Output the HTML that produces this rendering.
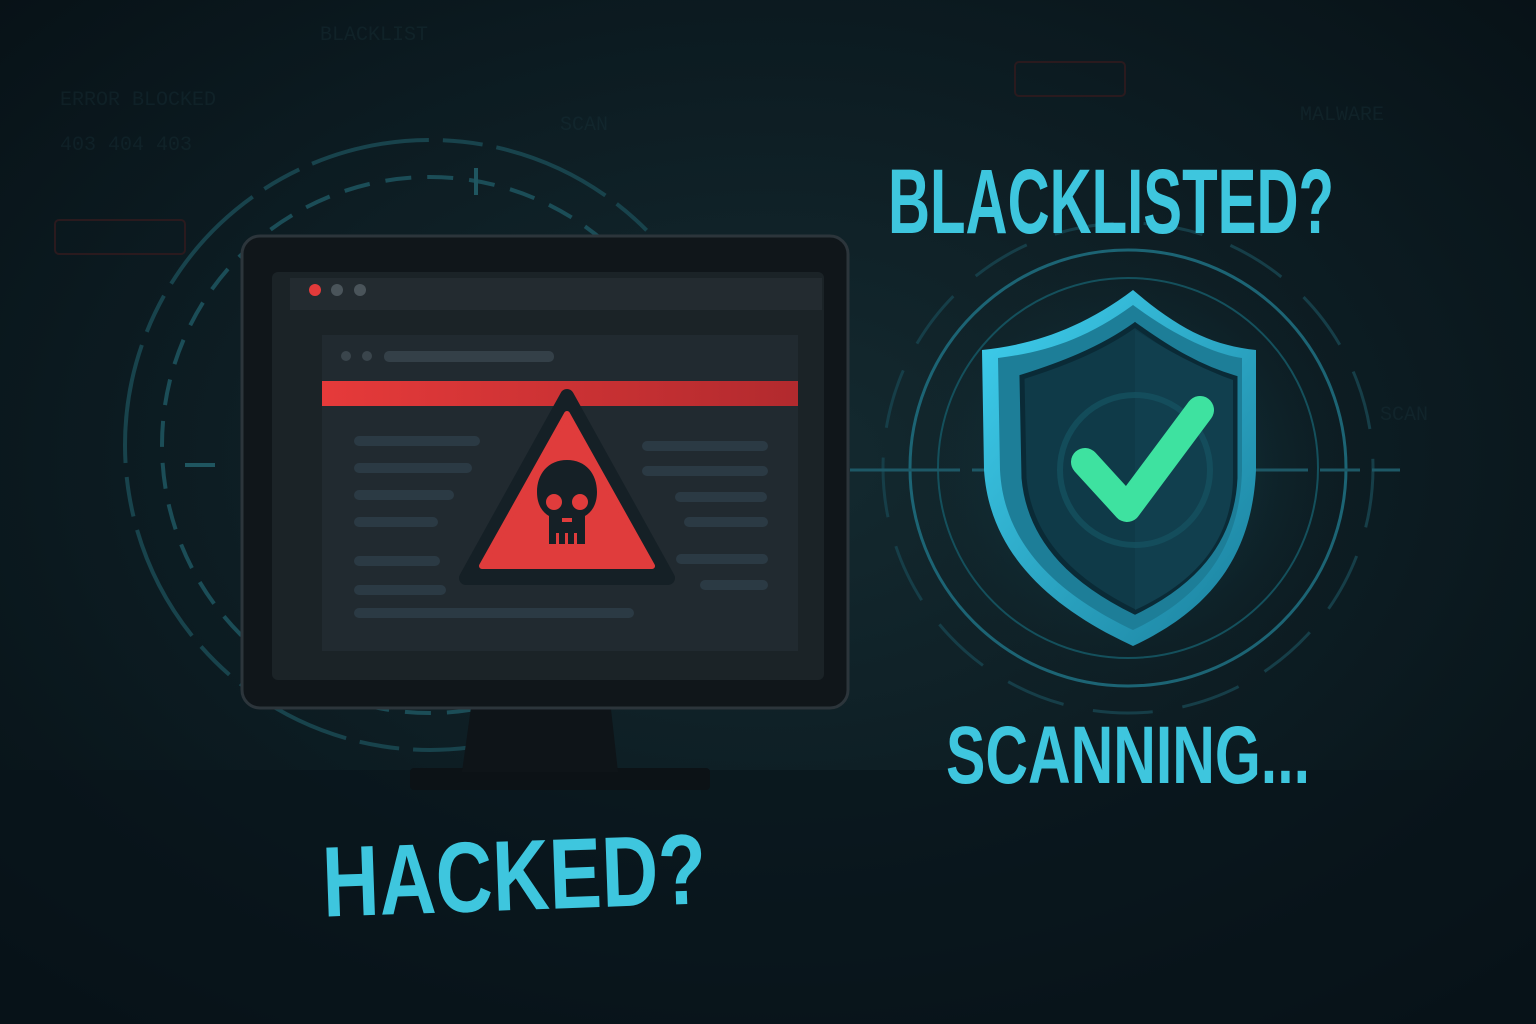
<!DOCTYPE html>
<html><head><meta charset="utf-8"><style>
html,body{margin:0;padding:0;background:#0a171c;}
svg{display:block}
</style></head><body>
<svg width="1536" height="1024" viewBox="0 0 1536 1024" xmlns="http://www.w3.org/2000/svg">
<defs>
<radialGradient id="bg" cx="0.5" cy="0.45" r="0.7">
<stop offset="0" stop-color="#142a30"/><stop offset="0.6" stop-color="#0c1b21"/><stop offset="1" stop-color="#071116"/>
</radialGradient>
<radialGradient id="glow" cx="0.5" cy="0.5" r="0.5">
<stop offset="0" stop-color="#1a6a7a" stop-opacity="0.55"/><stop offset="1" stop-color="#0c1b21" stop-opacity="0"/>
</radialGradient>
<linearGradient id="sh" x1="0" y1="0" x2="1" y2="1">
<stop offset="0" stop-color="#3fd0ef"/><stop offset="1" stop-color="#1a7f9c"/>
</linearGradient>
<linearGradient id="redbar" x1="0" x2="1">
<stop offset="0" stop-color="#e63a3a"/><stop offset="1" stop-color="#b22a2e"/>
</linearGradient>
</defs>
<rect width="1536" height="1024" fill="url(#bg)"/>
<rect x="0" y="770" width="1536" height="254" fill="#08141a" opacity="0.6"/>
<g font-family="Liberation Mono, monospace" fill="#1d3a42" font-size="20" opacity="0.3">
<text x="60" y="105">ERROR  BLOCKED</text><text x="320" y="40">BLACKLIST</text>
<text x="60" y="150">403 404  403</text><text x="560" y="130">SCAN</text>
<text x="1300" y="120">MALWARE</text><text x="1380" y="420">SCAN</text>
</g>
<rect x="55" y="220" width="130" height="34" rx="4" fill="none" stroke="#2a1a1e" stroke-width="2"/>
<rect x="1015" y="62" width="110" height="34" rx="4" fill="none" stroke="#2a1a1e" stroke-width="2"/>
<g fill="none" stroke="#18434c" stroke-width="4">
<circle cx="430" cy="445" r="305" stroke-dasharray="120 14 40 14"/>
<circle cx="430" cy="445" r="268" stroke-dasharray="26 16" stroke="#1b4d57"/>
</g>
<line x1="476" y1="168" x2="476" y2="195" stroke="#1f5660" stroke-width="4"/>
<line x1="185" y1="465" x2="215" y2="465" stroke="#1f5660" stroke-width="4"/>
<circle cx="1128" cy="468" r="230" fill="url(#glow)"/>
<g fill="none" stroke="#1c6474" stroke-width="3">
<circle cx="1128" cy="468" r="218"/>
<circle cx="1128" cy="468" r="245" stroke="#163e48" stroke-dasharray="60 30"/>
<circle cx="1128" cy="468" r="190" stroke="#14505c" stroke-width="2"/>
</g>
<line x1="850" y1="470" x2="1400" y2="470" stroke="#1d5866" stroke-width="3" stroke-dasharray="110 12 40 12"/>
<rect x="410" y="768" width="300" height="22" rx="4" fill="#0c1216"/>
<path d="M472,700 L610,700 L618,772 L462,772 Z" fill="#0e1418"/>
<rect x="242" y="236" width="606" height="472" rx="18" fill="#10161a" stroke="#2c353b" stroke-width="3"/>
<rect x="272" y="272" width="552" height="408" rx="6" fill="#1b2327"/>
<rect x="290" y="278" width="532" height="32" fill="#232b30"/>
<circle cx="315" cy="290" r="6" fill="#e23a3a"/><circle cx="337" cy="290" r="6" fill="#4a545a"/><circle cx="360" cy="290" r="6" fill="#4a545a"/>
<rect x="322" y="335" width="476" height="316" fill="#212a30"/>
<circle cx="346" cy="356" r="5" fill="#3a454c"/><circle cx="367" cy="356" r="5" fill="#3a454c"/>
<rect x="384" y="351" width="170" height="11" rx="5" fill="#344048"/>
<rect x="322" y="381" width="476" height="25" fill="url(#redbar)"/>
<g fill="#2b3a44">
<rect x="354" y="436" width="126" height="10" rx="5"/><rect x="354" y="463" width="118" height="10" rx="5"/>
<rect x="354" y="490" width="100" height="10" rx="5"/><rect x="354" y="517" width="84" height="10" rx="5"/>
<rect x="354" y="556" width="86" height="10" rx="5"/><rect x="354" y="585" width="92" height="10" rx="5"/>
<rect x="354" y="608" width="280" height="10" rx="5"/>
<rect x="642" y="441" width="126" height="10" rx="5"/><rect x="642" y="466" width="126" height="10" rx="5"/>
<rect x="675" y="492" width="92" height="10" rx="5"/><rect x="684" y="517" width="84" height="10" rx="5"/>
<rect x="676" y="554" width="92" height="10" rx="5"/><rect x="700" y="580" width="68" height="10" rx="5"/>
</g>
<path d="M567,396 L668,578 L466,578 Z" fill="#152026" stroke="#152026" stroke-width="14" stroke-linejoin="round"/>
<path d="M567,414 L652,566 L482,566 Z" fill="#e03c3c" stroke="#e03c3c" stroke-width="6" stroke-linejoin="round"/>
<path d="M567,460 C548,460 537,474 537,492 C537,504 542,512 549,516 L549,544 L585,544 L585,516 C592,512 597,504 597,492 C597,474 586,460 567,460 Z" fill="#152026"/>
<circle cx="554" cy="502" r="8" fill="#e03c3c"/><circle cx="580" cy="502" r="8" fill="#e03c3c"/>
<rect x="562" y="518" width="10" height="4" fill="#e03c3c"/>
<g fill="#e03c3c"><rect x="556" y="533" width="3" height="11"/><rect x="565" y="533" width="3" height="11"/><rect x="574" y="533" width="3" height="11"/></g>
<path d="M1133,290 C1080,330 1030,345 982,350 L984,470 C990,560 1060,612 1133,646 C1206,612 1252,560 1256,470 L1256,350 C1212,345 1180,330 1133,290 Z" fill="url(#sh)"/>
<path d="M1133,305 C1085,340 1045,352 998,358 L1000,470 C1004,550 1066,598 1133,630 C1200,598 1240,550 1242,470 L1242,358 C1220,355 1180,340 1133,305 Z" fill="#1d7e98"/>
<path d="M1135,325 C1100,350 1060,365 1022,377 L1024,478 C1030,545 1080,585 1135,612 C1190,585 1232,545 1235,478 L1235,378 C1200,368 1170,350 1135,325 Z" fill="#0f3a48" stroke="#0a2a36" stroke-width="5"/>
<path d="M1135,330 L1135,610 C1190,585 1232,545 1233,478 L1233,380 C1200,368 1170,352 1135,330 Z" fill="#113f4e"/>
<circle cx="1135" cy="470" r="75" fill="none" stroke="#165462" stroke-width="6" opacity="0.7"/>
<path d="M1085,462 L1127,508 L1200,410" fill="none" stroke="#3ee2a0" stroke-width="28" stroke-linecap="round" stroke-linejoin="round"/>
<g font-family="Liberation Sans Narrow, Liberation Sans, sans-serif" font-weight="bold" fill="#3ec6de">
<text x="888" y="233" font-size="92" textLength="446" lengthAdjust="spacingAndGlyphs">BLACKLISTED?</text>
<text x="946" y="783" font-size="82" textLength="364" lengthAdjust="spacingAndGlyphs">SCANNING...</text>
<text x="322" y="910" font-size="100" textLength="384" lengthAdjust="spacingAndGlyphs" transform="rotate(-2 514 870)">HACKED?</text>
</g>
</svg>
</body></html>
